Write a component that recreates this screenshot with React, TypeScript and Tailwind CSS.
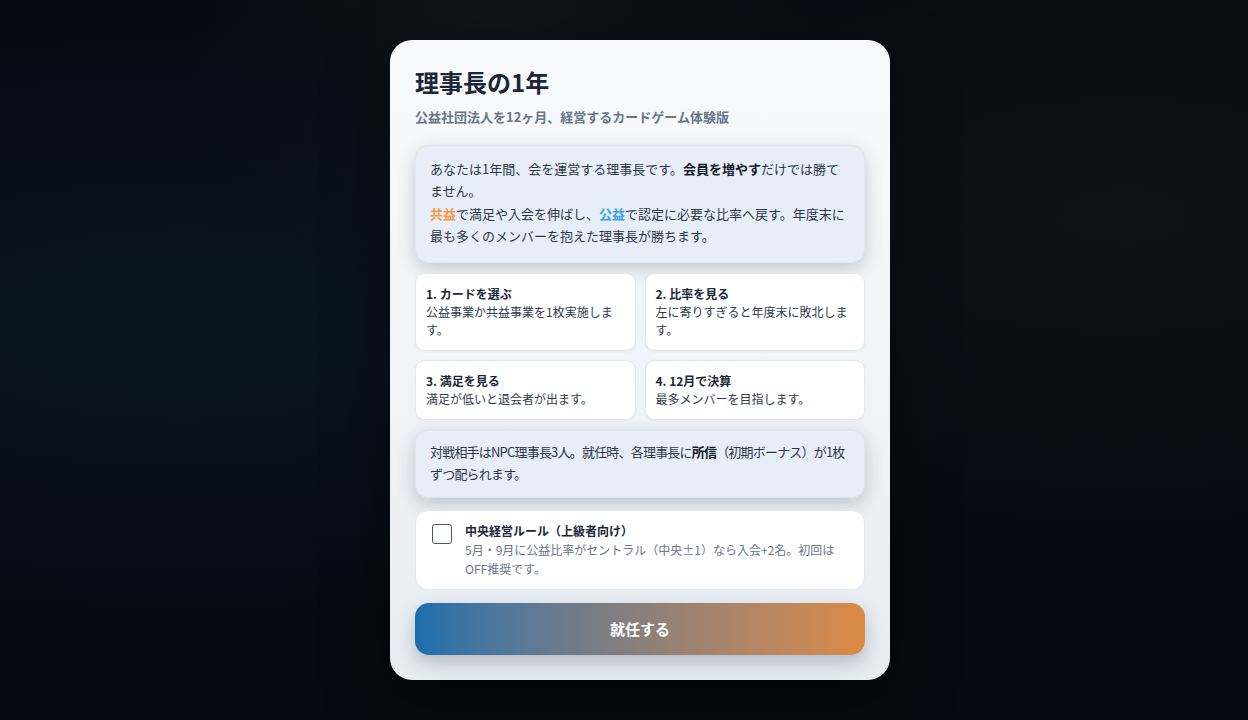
import { Check } from "lucide-react";
import { useState } from "react";

const steps = [
  { title: "1. カードを選ぶ", body: "公益事業か共益事業を1枚実施します。" },
  { title: "2. 比率を見る", body: "左に寄りすぎると年度末に敗北します。" },
  { title: "3. 満足を見る", body: "満足が低いと退会者が出ます。" },
  { title: "4. 12月で決算", body: "最多メンバーを目指します。" },
];

export default function App() {
  const [central, setCentral] = useState(false);

  return (
    <div
      className="min-h-screen w-full flex justify-center items-start pt-[40px] pl-8 bg-[#050a12] bg-[radial-gradient(ellipse_at_15%_45%,#0a1522_0%,transparent_55%),radial-gradient(ellipse_at_90%_30%,#0e1118_0%,transparent_50%),radial-gradient(ellipse_at_40%_2%,#10141b_0%,transparent_30%)]"
      style={{ fontFamily: '"Noto Sans CJK JP", "Noto Sans", sans-serif' }}
    >
      {/* Modal */}
      <div className="w-[500px] rounded-[22px] bg-gradient-to-b from-[#f8fafc] via-[#f1f4f8] to-[#e7ecf3] px-[25px] pt-[26px] pb-[25px] shadow-[0_20px_60px_rgba(0,0,0,0.5)]">
        <h1 className="text-[24px] leading-8 font-bold text-[#1b2638]">理事長の1年</h1>
        <p className="mt-[9px] text-[13px] leading-5 font-bold text-[#687589]">
          公益社団法人を12ヶ月、経営するカードゲーム体験版
        </p>

        {/* Intro */}
        <div className="mt-[18px] rounded-[13px] bg-[#e8eef7] border border-[#dfe6f0] px-[14px] pt-[12px] pb-[15px] text-[13px] leading-[22px] text-[#2c3649] shadow-[0_6px_18px_rgba(30,41,59,0.22)]">
          <p>
            あなたは1年間、会を運営する理事長です。
            <span className="font-bold text-[#141d2c]">会員を増やす</span>
            だけでは勝てません。
          </p>
          <p className="mt-[1px]">
            <span className="font-bold text-[#f59a4a]">共益</span>
            で満足や入会を伸ばし、
            <span className="font-bold text-[#3aa4e6]">公益</span>
            で認定に必要な比率へ戻す。年度末に最も多くのメンバーを抱えた理事長が勝ちます。
          </p>
        </div>

        {/* Steps */}
        <div className="mt-[10px] grid grid-cols-2 gap-[9px]">
          {steps.map((s) => (
            <div
              key={s.title}
              className="rounded-[10px] bg-white border border-[#e3e8ef] px-[10px] pt-[11px] pb-[11px] shadow-[0_1px_3px_rgba(30,41,59,0.05)]"
            >
              <div className="text-[12px] leading-[18px] font-bold text-[#1b2638]">{s.title}</div>
              <div className="text-[12px] leading-[18px] text-[#2f3a4c]">{s.body}</div>
            </div>
          ))}
        </div>

        {/* NPC note */}
        <div className="mt-[10px] rounded-[13px] bg-[#e8eef7] border border-[#dfe6f0] pl-[14px] pr-[8px] pt-[10px] pb-[12px] text-[13px] leading-[22px] tracking-[-0.8px] text-[#2c3649] shadow-[0_6px_18px_rgba(30,41,59,0.22)]">
          対戦相手はNPC理事長3人。就任時、各理事長に
          <span className="font-bold text-[#141d2c]">所信</span>
          （初期ボーナス）が1枚ずつ配られます。
        </div>

        {/* Option */}
        <label className="mt-[12px] flex items-start gap-[13px] rounded-[13px] bg-white border border-[#e3e8ef] pl-[16px] pr-[14px] pt-[11px] pb-[11px] cursor-pointer">
          <button
            type="button"
            onClick={() => setCentral(!central)}
            className={`mt-[2px] w-[20px] h-[20px] shrink-0 rounded-[3px] border-[1.5px] border-[#4b5563] flex items-center justify-center ${
              central ? "bg-[#1f6fa8] border-[#1f6fa8]" : "bg-white"
            }`}
          >
            {central && <Check className="w-3.5 h-3.5 text-white" strokeWidth={3} />}
          </button>
          <div className="min-w-0">
            <div className="text-[12px] leading-[18px] font-bold text-[#1b2638]">
              中央経営ルール（上級者向け）
            </div>
            <div className="text-[12px] leading-[19px] text-[#6b7686]">
              5月・9月に公益比率がセントラル（中央±1）なら入会+2名。初回はOFF推奨です。
            </div>
          </div>
        </label>

        {/* Start */}
        <button
          type="button"
          className="mt-[13px] w-full h-[52px] rounded-[14px] bg-gradient-to-r from-[#176fad] via-[#8a7f7a] to-[#dc8a43] text-white text-[15px] font-bold shadow-[0_8px_18px_rgba(30,41,59,0.25)]"
        >
          就任する
        </button>
      </div>
    </div>
  );
}
